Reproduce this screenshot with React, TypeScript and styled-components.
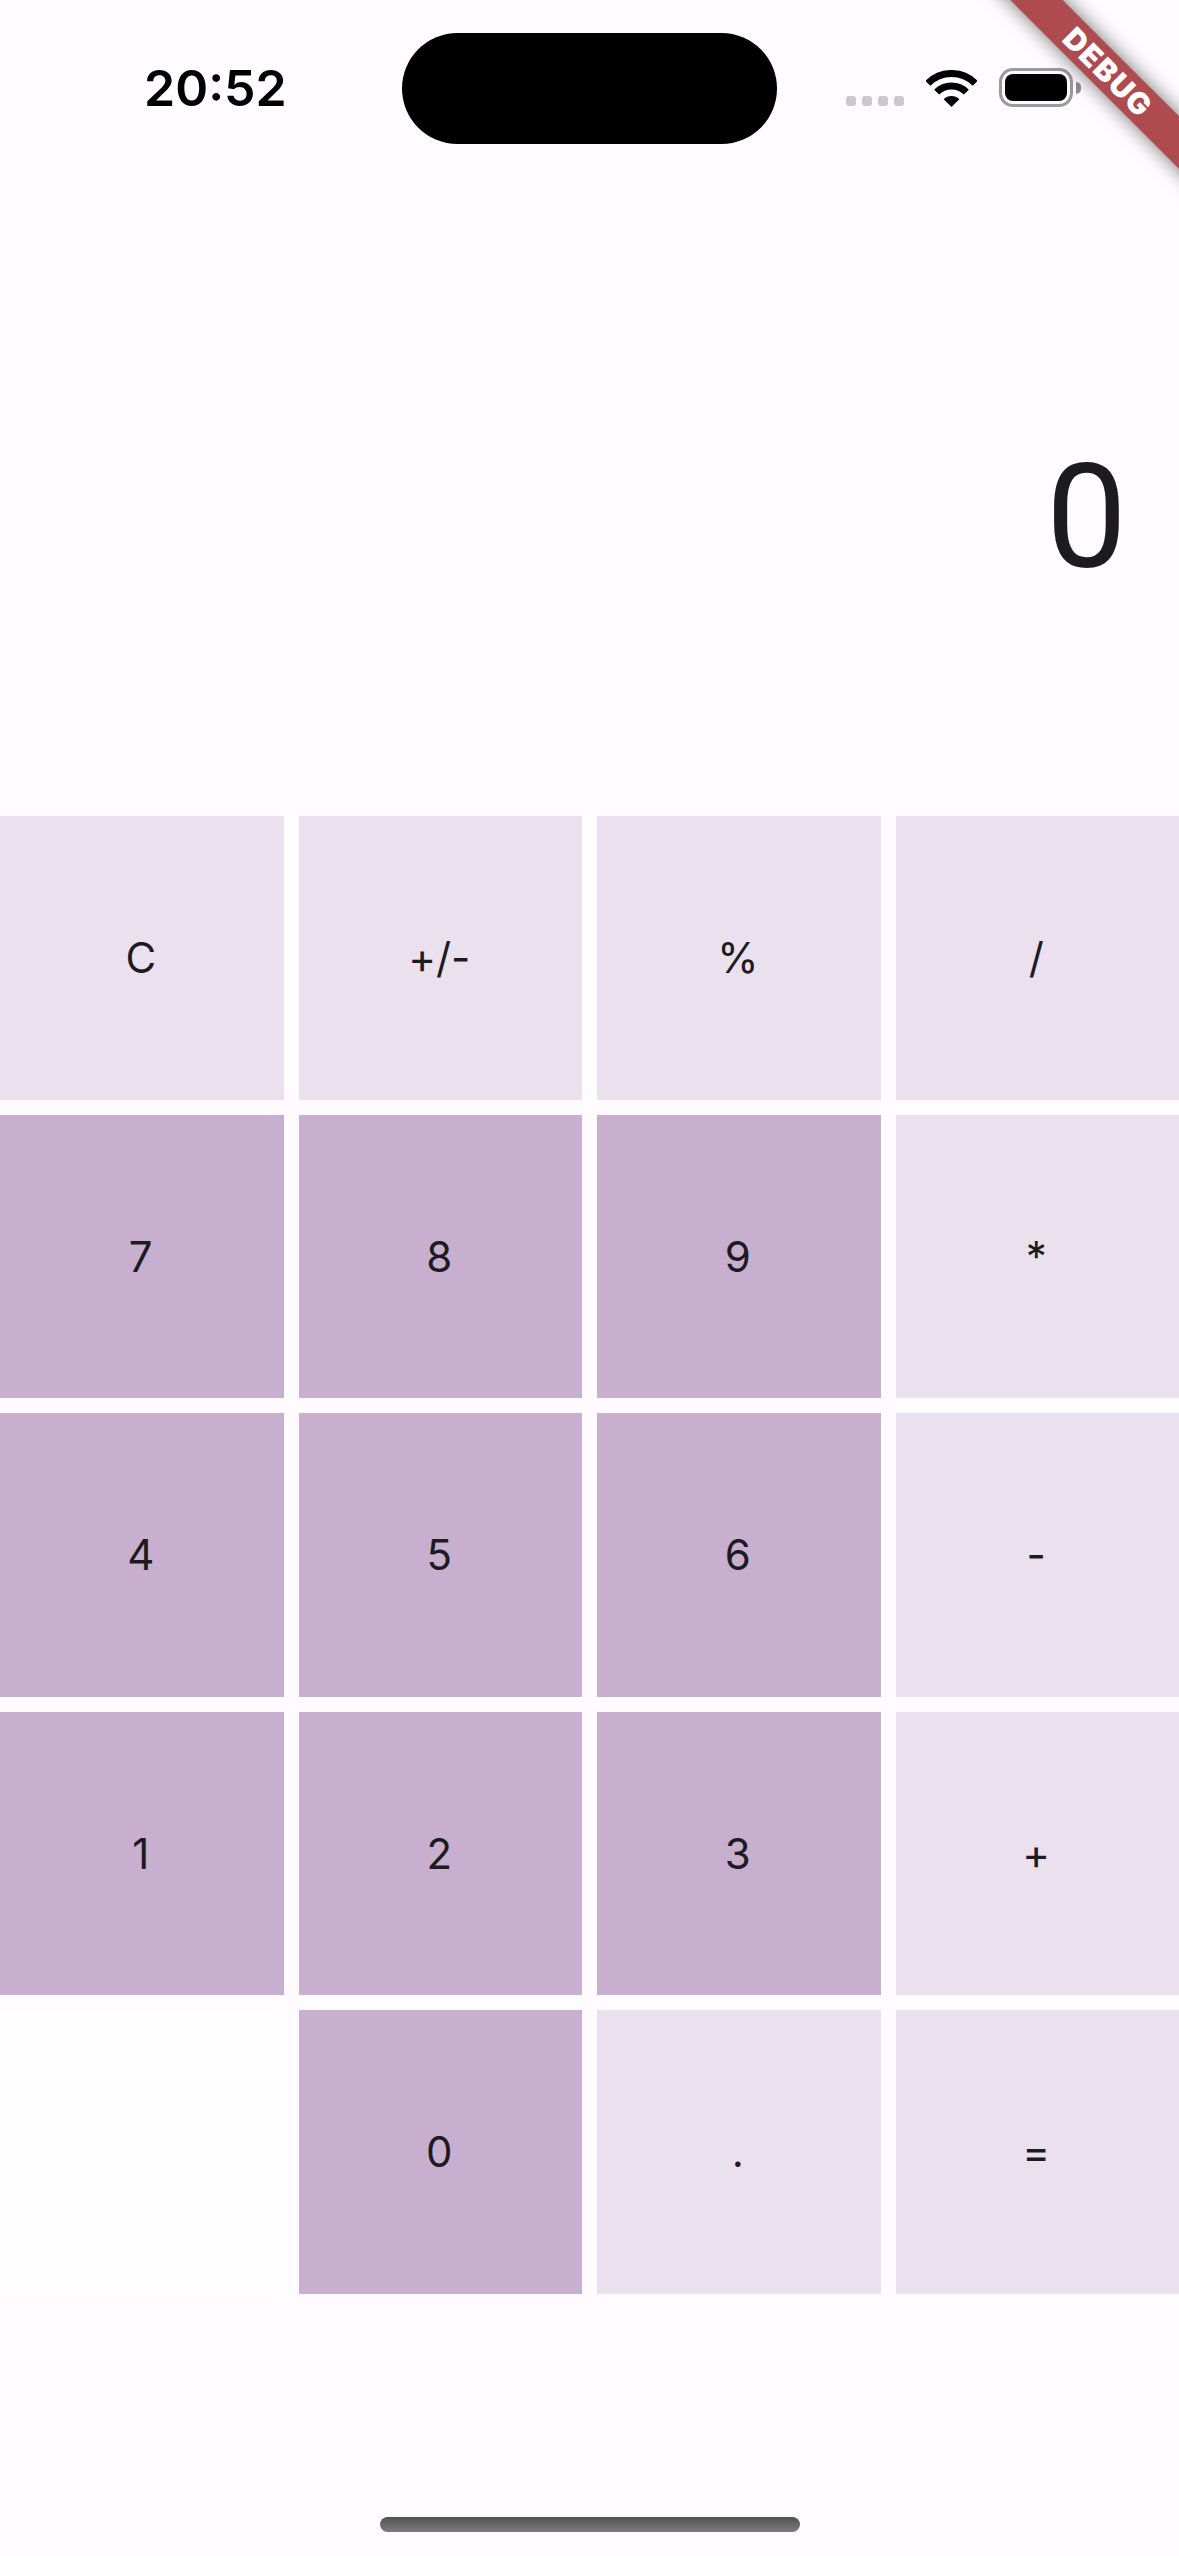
import React from 'react';
import styled, { createGlobalStyle } from 'styled-components';

type Kind = 'light' | 'dark' | 'blank';

interface Key {
  label: string,
  kind: Kind
}

const keys: Key[] = [
  { label: 'C', kind: 'light' },
  { label: '+/-', kind: 'light' },
  { label: '%', kind: 'light' },
  { label: '/', kind: 'light' },
  { label: '7', kind: 'dark' },
  { label: '8', kind: 'dark' },
  { label: '9', kind: 'dark' },
  { label: '*', kind: 'light' },
  { label: '4', kind: 'dark' },
  { label: '5', kind: 'dark' },
  { label: '6', kind: 'dark' },
  { label: '-', kind: 'light' },
  { label: '1', kind: 'dark' },
  { label: '2', kind: 'dark' },
  { label: '3', kind: 'dark' },
  { label: '+', kind: 'light' },
  { label: '', kind: 'blank' },
  { label: '0', kind: 'dark' },
  { label: '.', kind: 'light' },
  { label: '=', kind: 'light' },
];

const keyColors: Record<Kind, string> = {
  light: '#ebe0ed',
  dark: '#c8aecf',
  blank: '#fefefe',
};

function WifiIcon() {
  return (
    <svg width="51" height="37" viewBox="0 0 51 37" fill="none">
      <path d="M1.8 13.3A33.5 33.5 0 0 1 49.2 13.3" stroke="#000" strokeWidth="7" />
      <path d="M10.65 22.15A21 21 0 0 1 40.35 22.15" stroke="#000" strokeWidth="7" />
      <path d="M25.5 37L17.7 29.2A11 11 0 0 1 33.3 29.2Z" fill="#000" />
    </svg>
  );
}

function App() {
  return (
    <Page>
      <GlobalStyle />
      <StatusBar>
        <Time>20:52</Time>
        <Island />
        <StatusIcons>
          <SignalDots>
            <Dot />
            <Dot />
            <Dot />
            <Dot />
          </SignalDots>
          <WifiIcon />
          <Battery>
            <BatteryFill />
          </Battery>
        </StatusIcons>
      </StatusBar>
      <Display>0</Display>
      <Keypad>
        {keys.map((key, index) => (
          <KeyButton key={index} $kind={key.kind}>
            {key.label}
          </KeyButton>
        ))}
      </Keypad>
      <HomeIndicator />
      <DebugRibbon>DEBUG</DebugRibbon>
    </Page>
  );
}

export default App

const GlobalStyle = createGlobalStyle`
  html, body {
    margin: 0;
    padding: 0;
    background: #fffbfe;
  }
`;

const Page = styled.div`
  position: relative;
  display: flex;
  flex-direction: column;
  width: 1179px;
  height: 2556px;
  overflow: hidden;
  background: #fffbfe;
  font-family: Inter, "Liberation Sans", sans-serif;
  color: #1c1b1f;
`;

const StatusBar = styled.div`
  display: flex;
  align-items: flex-start;
  height: 144px;
  padding: 33px 0 0 144px;
  box-sizing: border-box;
`;

const Time = styled.div`
  width: 258px;
  margin-top: 24px;
  font-size: 50px;
  line-height: 62px;
  font-weight: 600;
  color: #000;
`;

const Island = styled.div`
  width: 375px;
  height: 111px;
  border-radius: 56px;
  background: #000;
`;

const StatusIcons = styled.div`
  display: flex;
  align-items: flex-end;
  margin: 35px 0 0 69px;
`;

const SignalDots = styled.div`
  display: flex;
  gap: 6px;
  margin: 0 22px 1px 0;
`;

const Dot = styled.span`
  width: 10px;
  height: 10px;
  border-radius: 3px;
  background: #ccc9cc;
`;

const Battery = styled.div`
  position: relative;
  width: 74px;
  height: 39px;
  margin-left: 22px;
  padding: 3px;
  box-sizing: border-box;
  border: 3px solid #9a9a9d;
  border-radius: 14px;

  &::after {
    content: "";
    position: absolute;
    top: 11px;
    right: -11px;
    width: 5px;
    height: 12px;
    border-radius: 0 6px 6px 0;
    background: #8e8e92;
  }
`;

const BatteryFill = styled.div`
  height: 100%;
  border-radius: 8px;
  background: #000;
`;

const Display = styled.div`
  display: flex;
  justify-content: flex-end;
  align-items: center;
  height: 672px;
  padding: 75px 52px 0 0;
  box-sizing: border-box;
  font-family: Roboto, "Liberation Sans", sans-serif;
  font-size: 144px;
  line-height: 1;
`;

const Keypad = styled.div`
  display: grid;
  grid-template-columns: repeat(4, 283.5px);
  grid-auto-rows: 283.5px;
  gap: 15px;
`;

const KeyButton = styled.div<{ $kind: Kind }>`
  display: flex;
  align-items: center;
  justify-content: center;
  padding-right: 2px;
  background: ${(props) => keyColors[props.$kind]};
  font-size: 42px;
`;

const HomeIndicator = styled.div`
  width: 420px;
  height: 15px;
  margin: auto auto 24px;
  border-radius: 8px;
  background: linear-gradient(#525252, #7c7c7c);
`;

const DebugRibbon = styled.div`
  position: absolute;
  top: 51.5px;
  left: 907px;
  width: 400px;
  height: 37px;
  display: flex;
  align-items: center;
  justify-content: center;
  padding-left: 4px;
  box-sizing: border-box;
  transform: rotate(45deg);
  background: rgba(150, 25, 28, 0.78);
  box-shadow: 0 0 20px rgba(0, 0, 0, 0.55);
  color: #fff;
  font-size: 30px;
  font-weight: 900;
  letter-spacing: 1.5px;
`;
